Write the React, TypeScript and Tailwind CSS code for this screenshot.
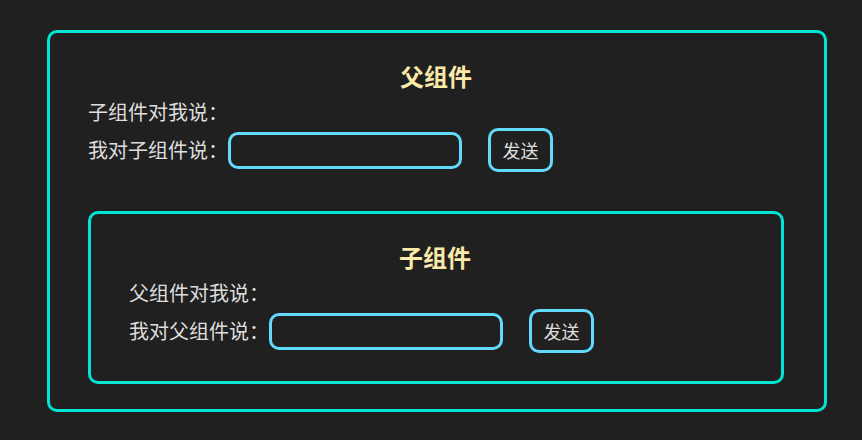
import React from "react";

const font = { fontFamily: '"Noto Sans CJK SC", "Noto Sans", sans-serif' };

function Row({ label }: { label: string }) {
  return (
    <div className="flex items-center h-[44px] mt-[2px]">
      <span className="text-[20px] leading-[28px] text-[#dedede] w-[140px] whitespace-nowrap">{label}</span>
      <input className="w-[234px] h-[37px] rounded-[10px] border-[3px] border-[#61dafb] bg-transparent outline-none text-[#dedede] px-2" />
      <button className="ml-[26px] w-[65px] h-[44px] rounded-[10px] border-[3px] border-[#61dafb] bg-transparent text-[18px] text-[#dedede] flex items-center justify-center">
        发送
      </button>
    </div>
  );
}

export default function App() {
  return (
    <div className="min-h-[440px] w-[862px] bg-[#202020] pt-[30px]" style={font}>
      <div className="ml-[47px] w-[780px] border-[3px] border-[#00e5d4] rounded-[10px] pt-[27px] pb-[25px] pl-[38px] pr-[40px]">
        <div className="text-center text-[24px] leading-[32px] font-bold text-[#fbeaa9]">父组件</div>
        <div className="mt-[6px] h-[28px] text-[20px] leading-[28px] text-[#dedede]">子组件对我说：</div>
        <Row label="我对子组件说：" />
        <div className="mt-[39px] border-[3px] border-[#00e5d4] rounded-[10px] pt-[27px] pb-[28px] pl-[38px] pr-[40px]">
          <div className="text-center text-[24px] leading-[32px] font-bold text-[#fbeaa9]">子组件</div>
          <div className="mt-[6px] h-[28px] text-[20px] leading-[28px] text-[#dedede]">父组件对我说：</div>
          <Row label="我对父组件说：" />
        </div>
      </div>
    </div>
  );
}
